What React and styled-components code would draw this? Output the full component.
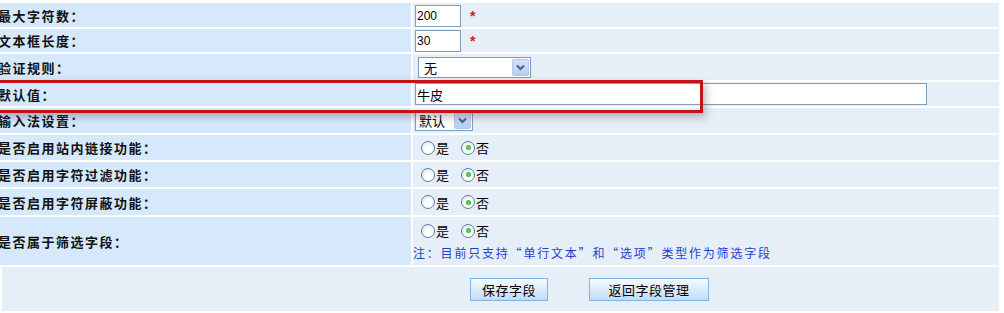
import React from 'react';
import styled, { createGlobalStyle } from 'styled-components';

const Global = createGlobalStyle`
  html, body {
    margin: 0;
    padding: 0;
    background: #fff;
    overflow: hidden;
  }
  body {
    font-family: "Liberation Sans", "Noto Sans CJK SC", sans-serif;
    font-size: 12px;
    color: #000;
  }
`;

const Page = styled.div`
  position: relative;
  width: 1004px;
  height: 313px;
  overflow: hidden;
`;

const Table = styled.div`
  display: grid;
  grid-template-columns: 411px 586px;
  column-gap: 2px;
  row-gap: 2px;
  margin-top: 1px;
  width: 999px;
`;

const LabelCell = styled.div`
  height: ${p => p.h}px;
  background: #d6e8fc;
  display: flex;
  align-items: center;
  overflow: hidden;
  font-family: "Noto Sans CJK SC", sans-serif;
  font-weight: bold;
  font-size: 13px;
  letter-spacing: 1.5px;
  color: #111;
  white-space: nowrap;
`;

const LabelText = styled.span`
  margin-left: -2px;
`;

const ValueCell = styled.div`
  height: ${p => p.h}px;
  background: #e6eef8;
  display: flex;
  flex-direction: ${p => (p.column ? 'column' : 'row')};
  align-items: ${p => (p.column ? 'flex-start' : p.align || 'center')};
  justify-content: ${p => (p.column ? 'center' : 'flex-start')};
  padding-left: ${p => p.pad || 0}px;
  box-sizing: border-box;
`;

const FullCell = styled.div`
  grid-column: 1 / 3;
  height: 44px;
  margin-left: 2px;
  background: #e6eef8;
  display: flex;
  align-items: center;
  padding-left: 468px;
  gap: 41px;
`;

const TextInput = styled.div`
  box-sizing: border-box;
  width: ${p => p.w}px;
  height: 22px;
  border: 1px solid #7f9db9;
  background: #fff;
  display: flex;
  align-items: center;
  padding-left: 1px;
  font-family: ${p => (p.cjk ? '"Noto Sans CJK SC", sans-serif' : '"Liberation Sans", sans-serif')};
  font-size: ${p => (p.cjk ? 13 : 12)}px;
  color: #000;
`;

const Star = styled.span`
  align-self: center;
  color: #e3131b;
  font-family: "Liberation Sans", sans-serif;
  font-size: 14px;
  font-weight: bold;
  margin-left: 9px;
  margin-top: 1px;
`;

const Select = styled.div`
  box-sizing: border-box;
  width: ${p => p.w}px;
  height: 21px;
  margin-left: ${p => p.ml || 0}px;
  border: 1px solid #7f9db9;
  background: #fff;
  display: flex;
  align-items: center;
  justify-content: space-between;
  padding: 0 1px 0 ${p => p.pl || 3}px;
  font-family: "Noto Sans CJK SC", sans-serif;
  font-size: 13px;
`;

const Arrow = styled.span`
  width: 17px;
  height: 17px;
  border-radius: 2px;
  background: linear-gradient(#d2e1fb, #b7cdf5);
  border: 1px solid #b5c9ee;
  box-sizing: border-box;
  display: flex;
  align-items: center;
  justify-content: center;
`;

const ArrowIcon = () => (
  <svg width="9" height="7" viewBox="0 0 9 7">
    <path d="M1 1.5 L4.5 5 L8 1.5" fill="none" stroke="#4d6185" strokeWidth="2" />
  </svg>
);

const RadioGroup = styled.div`
  display: flex;
  align-items: center;
  font-family: "Noto Sans CJK SC", sans-serif;
  font-size: 13px;
`;

const RadioItem = styled.span`
  display: flex;
  align-items: center;
  margin-right: 12px;
`;

const Radio = styled.span`
  box-sizing: border-box;
  width: 14px;
  height: 14px;
  border-radius: 50%;
  border: 1px solid #5f7c9c;
  background: radial-gradient(circle at 60% 65%, #ffffff 30%, #d9e0e8 100%);
  display: flex;
  align-items: center;
  justify-content: center;
  margin-right: 1px;

  &::after {
    content: '';
    display: ${p => (p.checked ? 'block' : 'none')};
    width: 5px;
    height: 5px;
    border-radius: 50%;
    background: radial-gradient(circle, #5fe05a 10%, #21a227 100%);
  }
`;

const Note = styled.div`
  color: #1f3fcf;
  font-family: "Noto Sans CJK SC", sans-serif;
  font-size: 12px;
  letter-spacing: 1.8px;
  margin-top: 4px;
  white-space: nowrap;
`;

const Button = styled.button`
  height: 23px;
  width: ${p => p.w}px;
  border: 1px solid #84b3e2;
  background: linear-gradient(#f6faff, #dcebfb 50%, #c2dbf5);
  font-family: "Noto Sans CJK SC", sans-serif;
  font-size: 13px;
  letter-spacing: 0.5px;
  color: #000;
  padding: 0;
  cursor: pointer;
`;

const Highlight = styled.div`
  position: absolute;
  left: -10px;
  top: 80px;
  width: 713px;
  height: 33px;
  box-sizing: border-box;
  border: 3px solid #c4121b;
  box-shadow: 3px 4px 8px rgba(60, 60, 60, 0.35);
  pointer-events: none;
`;

const YesNo = () => (
  <RadioGroup>
    <RadioItem>
      <Radio />是
    </RadioItem>
    <RadioItem>
      <Radio checked />否
    </RadioItem>
  </RadioGroup>
);

const Label = ({ h, children }) => (
  <LabelCell h={h}>
    <LabelText>{children}</LabelText>
  </LabelCell>
);

export default function App() {
  return (
    <Page>
      <Global />
      <Table>
        <LabelCell h={0} />
        <ValueCell h={0} />

        <Label h={24}>最大字符数：</Label>
        <ValueCell h={24} pad={2} align="flex-end">
          <TextInput w={46}>200</TextInput>
          <Star>*</Star>
        </ValueCell>

        <Label h={23}>文本框长度：</Label>
        <ValueCell h={23} pad={2} align="flex-end">
          <TextInput w={46}>30</TextInput>
          <Star>*</Star>
        </ValueCell>

        <Label h={26}>验证规则：</Label>
        <ValueCell h={26} pad={2}>
          <Select w={113} ml={3} pl={5}>
            无
            <Arrow>
              <ArrowIcon />
            </Arrow>
          </Select>
        </ValueCell>

        <Label h={24}>默认值：</Label>
        <ValueCell h={24} pad={2}>
          <TextInput w={512} cjk>牛皮</TextInput>
        </ValueCell>

        <Label h={25}>输入法设置：</Label>
        <ValueCell h={25} pad={2}>
          <Select w={58} pl={3}>
            默认
            <Arrow>
              <ArrowIcon />
            </Arrow>
          </Select>
        </ValueCell>

        <Label h={25}>是否启用站内链接功能：</Label>
        <ValueCell h={25} pad={8}>
          <YesNo />
        </ValueCell>

        <Label h={25}>是否启用字符过滤功能：</Label>
        <ValueCell h={25} pad={8}>
          <YesNo />
        </ValueCell>

        <Label h={26}>是否启用字符屏蔽功能：</Label>
        <ValueCell h={26} pad={8}>
          <YesNo />
        </ValueCell>

        <Label h={48}>是否属于筛选字段：</Label>
        <ValueCell h={48} column>
          <div style={{ paddingLeft: 8 }}>
            <YesNo />
          </div>
          <Note>注：目前只支持“单行文本”和“选项”类型作为筛选字段</Note>
        </ValueCell>

        <FullCell>
          <Button w={78}>保存字段</Button>
          <Button w={120}>返回字段管理</Button>
        </FullCell>
      </Table>
      <Highlight />
    </Page>
  );
}
